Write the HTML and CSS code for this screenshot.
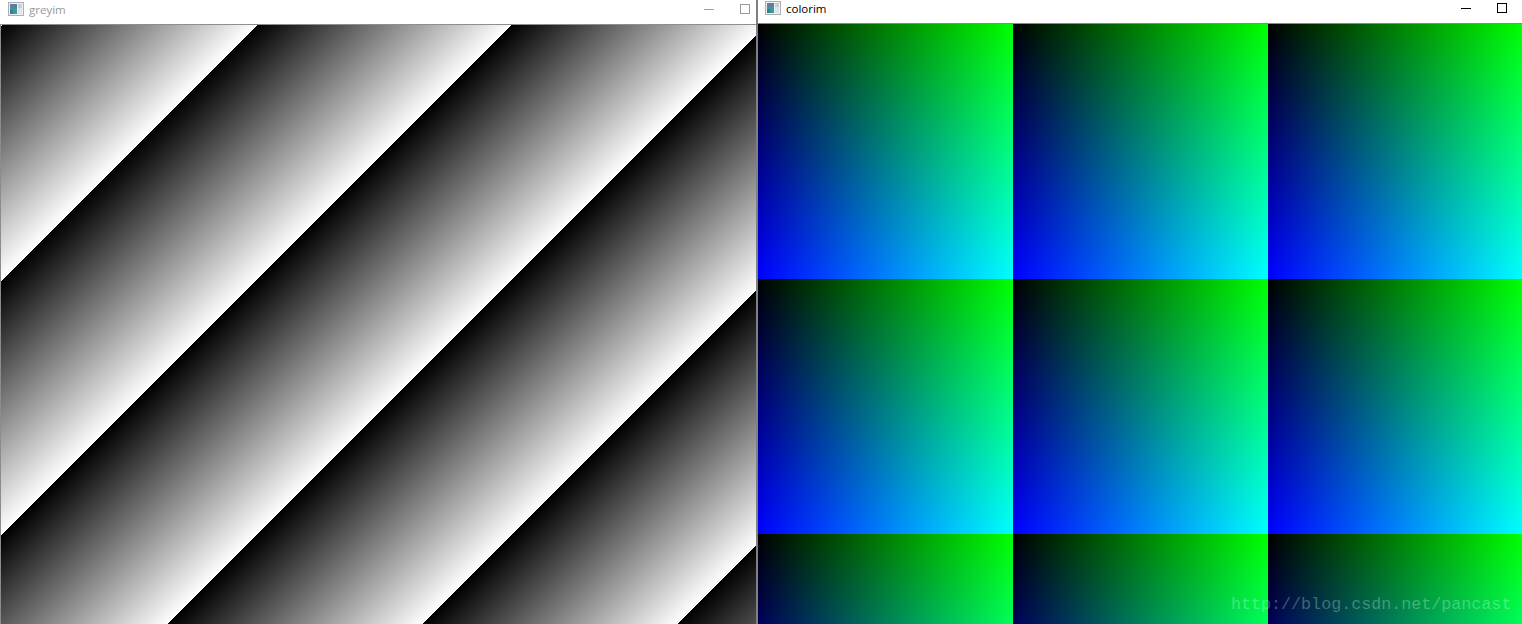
FILE: index.html
```html
<!DOCTYPE html>
<html lang="en">
<head>
<meta charset="utf-8">
<title>greyim and colorim</title>
<link rel="stylesheet" href="styles.css">
</head>
<body>
<div class="desktop">
  <section class="window window-grey">
    <header class="titlebar titlebar-inactive">
      <svg class="app-icon" width="16" height="14" viewBox="0 0 16 14"><rect x="0.5" y="0.5" width="15" height="13" fill="#eef1f2" stroke="#a9b1b5"/><rect x="2" y="2" width="7" height="10" fill="#3f9a8f"/><rect x="2" y="2" width="7" height="4" fill="#5b7fa6"/><rect x="2" y="8" width="3" height="4" fill="#2f7f9f"/><rect x="10" y="2" width="4" height="4" fill="#c4d0d6"/><rect x="10" y="6" width="4" height="6" fill="#dde3e6"/></svg>
      <span class="title">greyim</span>
      <div class="controls">
        <span class="ctl-min"></span>
        <span class="ctl-max"></span>
      </div>
    </header>
    <div class="canvas canvas-grey"></div>
  </section>
  <section class="window window-color">
    <header class="titlebar">
      <svg class="app-icon" width="16" height="14" viewBox="0 0 16 14"><rect x="0.5" y="0.5" width="15" height="13" fill="#eef1f2" stroke="#a9b1b5"/><rect x="2" y="2" width="7" height="10" fill="#3f9a8f"/><rect x="2" y="2" width="7" height="4" fill="#5b7fa6"/><rect x="2" y="8" width="3" height="4" fill="#2f7f9f"/><rect x="10" y="2" width="4" height="4" fill="#c4d0d6"/><rect x="10" y="6" width="4" height="6" fill="#dde3e6"/></svg>
      <span class="title">colorim</span>
      <div class="controls">
        <span class="ctl-min"></span>
        <span class="ctl-max"></span>
      </div>
    </header>
    <div class="canvas canvas-color"></div>
  </section>
</div>
<div class="watermark">http://blog.csdn.net/pancast</div>
</body>
</html>
```
FILE: styles.css
```css
* { box-sizing: border-box; }
html, body { margin: 0; height: 100%; overflow: hidden; background: #fff; }
.desktop { display: flex; width: 1522px; height: 624px; }
.window { display: flex; flex-direction: column; height: 624px; }
.window-grey { width: 756px; border-left: 1px solid #8c8c8c; }
.window-color { width: 766px; border-left: 2px solid #808080; }
.titlebar {
  display: flex; align-items: center; flex: none;
  background: #fff; font: 11.5px "Open Sans", "Liberation Sans", Arial, sans-serif; color: #000;
}
.window-grey .titlebar { height: 25px; padding: 0 6px 6px 8px; border-bottom: 1px solid #8e8e8e; margin-left: -1px; }
.window-color .titlebar { height: 24px; padding: 0 15px 7px 7px; border-bottom: 1px solid #8f7f9f; }
.titlebar-inactive { color: #999; }
.app-icon { flex: none; margin-right: 5px; }
.controls { margin-left: auto; display: flex; align-items: center; gap: 26px; }
.ctl-min { width: 10px; height: 1px; background: #000; }
.ctl-max { width: 10px; height: 10px; border: 1px solid #000; }
.titlebar-inactive .ctl-min { background: #a0a0a0; }
.titlebar-inactive .ctl-max { border-color: #999; }
.canvas { flex: 1; }
.canvas-grey {
  background: repeating-linear-gradient(135deg, #000 0.71px, #fff 181.02px, #000 181.02px);
}
.canvas-color {
  background-image: linear-gradient(to right, #000, #0f0), linear-gradient(to bottom, #000, #00f);
  background-size: 255px 255px;
  background-blend-mode: screen;
}
.watermark {
  position: absolute; left: 1231px; top: 595px;
  font: 16.7px "Liberation Mono", "Courier New", monospace;
  color: rgba(255, 255, 255, 0.28);
}
```
